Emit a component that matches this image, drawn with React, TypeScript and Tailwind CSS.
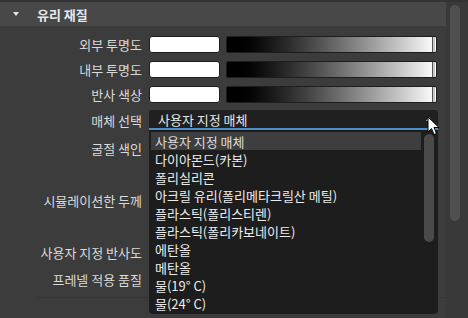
const font = { fontFamily: '"Noto Sans CJK KR", "Noto Sans", sans-serif' };

function Swatch() {
  return <div className="w-[71px] h-[17px] bg-white border border-[#1e1e1e] rounded-[3px]" />;
}

function Gradient() {
  return (
    <div className="relative w-[211px] h-[17px] border border-[#1e1e1e] rounded-[2px] bg-gradient-to-r from-black to-white">
      <div className="absolute right-[1px] top-0 h-full w-[3px] bg-[#c8c8c8] border-l border-[#555]" />
    </div>
  );
}

function Row({ label, h, children }: { label: string; h: string; children?: React.ReactNode }) {
  return (
    <div className={`flex items-center ${h}`}>
      <div className="w-[142px] text-right text-[13px] text-[#dadada] leading-none whitespace-nowrap">{label}</div>
      <div className="ml-[7px] flex items-center gap-[6px]">{children}</div>
    </div>
  );
}

const items = [
  '사용자 지정 매체',
  '다이아몬드(카본)',
  '폴리실리콘',
  '아크릴 유리(폴리메타크릴산 메틸)',
  '플라스틱(폴리스티렌)',
  '플라스틱(폴리카보네이트)',
  '에탄올',
  '메탄올',
  '물(19° C)',
  '물(24° C)',
];

export default function App() {
  return (
    <div className="w-[468px] h-[318px] bg-[#333333] overflow-hidden relative" style={font}>
      <div className="flex h-full pt-[2px]">
        <div className="w-[446px] h-full bg-[#3c3c3c] flex flex-col">
          <div className="h-[24px] bg-[#484848] flex items-center">
            <div className="ml-[13px] w-0 h-0 border-l-[3px] border-r-[3px] border-t-[4px] border-l-transparent border-r-transparent border-t-[#e6e6e6]" />
            <div className="ml-[18px] text-[13px] font-bold text-[#e2e8ee] leading-none">유리 재질</div>
          </div>
          <div className="pt-[6px] flex flex-col">
            <Row label="외부 투명도" h="h-[25px]">
              <Swatch />
              <Gradient />
            </Row>
            <Row label="내부 투명도" h="h-[25px]">
              <Swatch />
              <Gradient />
            </Row>
            <Row label="반사 색상" h="h-[25px]">
              <Swatch />
              <Gradient />
            </Row>
            <Row label="매체 선택" h="h-[26px]">
              <div className="relative">
                <div className="w-[289px] h-[20px] bg-[#202020] rounded-t-[3px] border-b-2 border-[#4c8fc8] flex items-center pl-[9px] text-[13px] text-[#e6e6e6] leading-none">
                  사용자 지정 매체
                  <div className="absolute right-[6px] top-[7px] w-0 h-0 border-l-[3px] border-r-[3px] border-b-[4px] border-l-transparent border-r-transparent border-b-[#cfcfcf]" />
                </div>
                <div className="absolute left-0 top-[20px] z-10 w-[289px] h-[184px] bg-[#1d1d1d] rounded-b-[4px] pt-[2px] pl-[2px]">
                  {items.map((t, i) => (
                    <div
                      key={t}
                      className={`w-[270px] h-[18px] flex items-center pl-[4px] text-[13px] leading-none whitespace-nowrap ${
                        i === 0 ? 'bg-[#3e3e3e] text-[#dcdcdc]' : 'text-[#ececec]'
                      }`}
                    >
                      {t}
                    </div>
                  ))}
                  <div className="absolute left-[275px] top-[4px] w-[10px] h-[108px] rounded-full bg-[#4a4a4a]" />
                </div>
              </div>
            </Row>
            <Row label="굴절 색인" h="h-[30px]" />
            <Row label="시뮬레이션한 두께" h="h-[74px]" />
            <Row label="사용자 지정 반사도" h="h-[30px]" />
            <Row label="프레넬 적용 품질" h="h-[24px]" />
            <div className="mt-[6px] ml-[37px] h-px bg-[#363636]" />
          </div>
        </div>
        <div className="w-[22px] h-full bg-[#393939] pt-[3px] pl-[4px]">
          <div className="w-[10px] h-[216px] rounded-full bg-[#4f4f4f]" />
        </div>
      </div>
      <svg className="absolute left-[427px] top-[116px] z-20" width="14" height="21" viewBox="0 0 14 21">
        <path d="M1 1 L1 16 L4.5 12.5 L7 18.5 L9.5 17.5 L7 11.5 L12 11.5 Z" fill="#ffffff" stroke="#000000" strokeWidth="1" strokeLinejoin="round" />
      </svg>
    </div>
  );
}
